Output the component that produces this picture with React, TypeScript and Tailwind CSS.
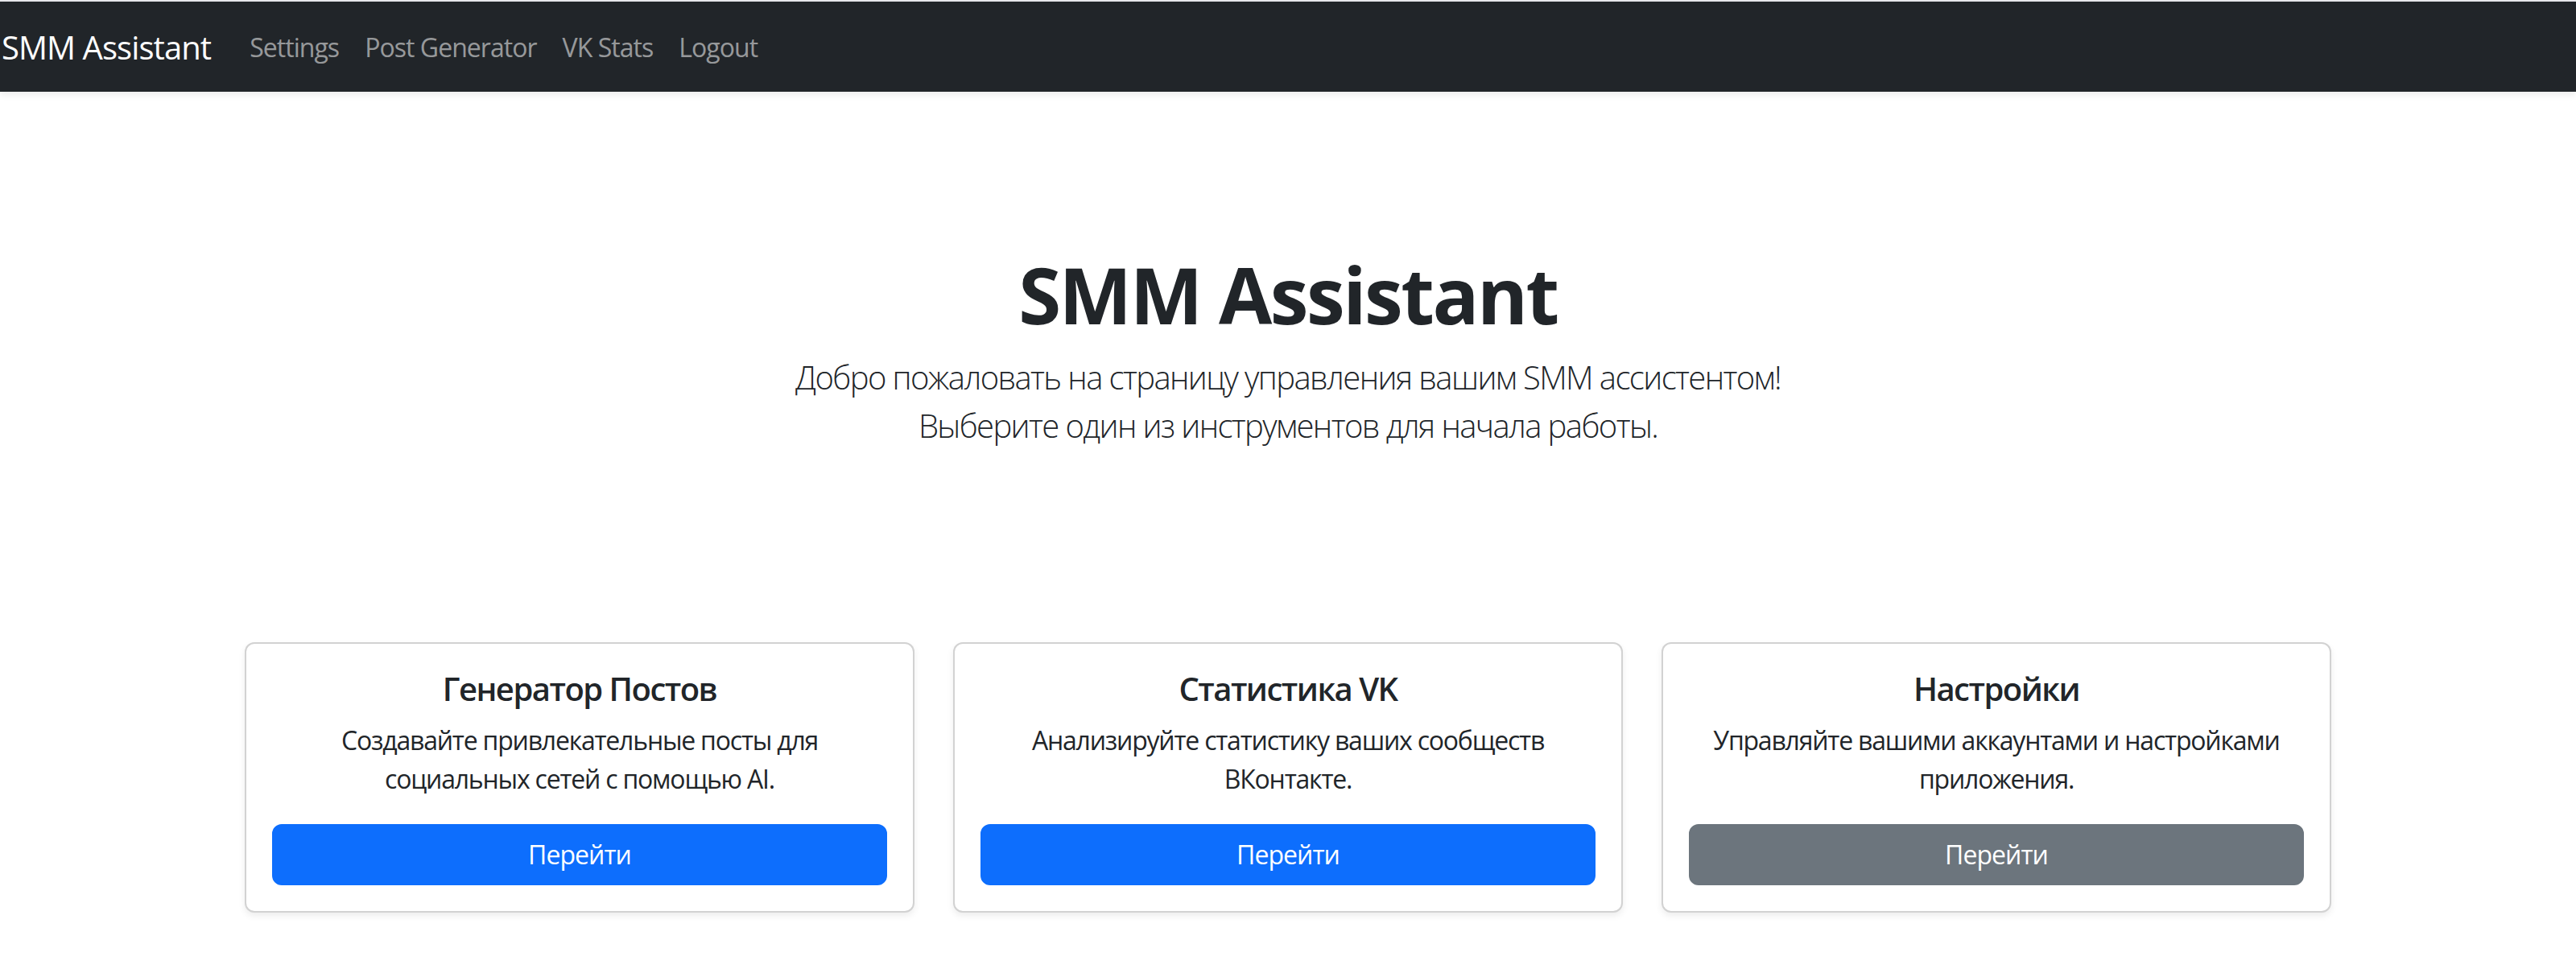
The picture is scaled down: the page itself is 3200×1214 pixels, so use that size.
import React from "react";

// ── data ──────────────────────────────────────────────────────────────────────

const NAV_LINKS = ["Settings", "Post Generator", "VK Stats", "Logout"];

type Tool = {
  title: string;
  text: string;
  variant: "primary" | "secondary";
};

const TOOLS: Tool[] = [
  {
    title: "Генератор Постов",
    text: "Создавайте привлекательные посты для социальных сетей с помощью AI.",
    variant: "primary",
  },
  {
    title: "Статистика VK",
    text: "Анализируйте статистику ваших сообществ ВКонтакте.",
    variant: "primary",
  },
  {
    title: "Настройки",
    text: "Управляйте вашими аккаунтами и настройками приложения.",
    variant: "secondary",
  },
];

// ── components ────────────────────────────────────────────────────────────────

function Navbar() {
  return (
    <nav className="flex h-[112px] items-center bg-[#212529] shadow-[0_4px_8px_rgba(0,0,0,0.075)]">
      <a href="#" className="mr-[32px] pl-[2px] pt-[2px] text-[40px] leading-[60px] tracking-[-0.023em] text-white">
        SMM Assistant
      </a>
      <ul className="flex items-center pt-[2px]">
        {NAV_LINKS.map((link) => (
          <li key={link}>
            <a href="#" className="block px-[16px] py-[16px] text-[32px] leading-[48px] tracking-[-0.03em] text-[rgba(255,255,255,0.55)]">
              {link}
            </a>
          </li>
        ))}
      </ul>
    </nav>
  );
}

function ToolCard({ tool }: { tool: Tool }) {
  const button =
    tool.variant === "primary"
      ? "border-[#0d6efd] bg-[#0d6efd]"
      : "border-[#6c757d] bg-[#6c757d]";

  return (
    <div className="rounded-[12px] border-2 border-[rgba(0,0,0,0.175)] bg-white p-[32px] text-center shadow-[0_4px_8px_rgba(0,0,0,0.075)]">
      <h5 className="mb-[16px] text-[40px] font-semibold leading-[1.2] tracking-[-0.038em]">{tool.title}</h5>
      <p className="mb-[32px] text-[32px] leading-[48px] tracking-[-0.038em]">{tool.text}</p>
      <a
        href="#"
        className={`block rounded-[12px] border-2 py-[12px] text-[32px] leading-[48px] tracking-[-0.03em] text-white ${button}`}
      >
        Перейти
      </a>
    </div>
  );
}

// ── page ──────────────────────────────────────────────────────────────────────

export default function App() {
  return (
    <div className="min-h-screen bg-white font-['Open_Sans',sans-serif] text-[#212529]">
      <div className="h-[2px] bg-[#e8e8ec]" />
      <Navbar />

      <main className="mx-auto w-[2640px] px-[24px]">
        <section className="pt-[194px] text-center">
          <h1 className="mb-[16px] text-[96px] font-bold leading-[1.2] tracking-[-0.026em]">SMM Assistant</h1>
          <p className="text-[40px] font-light leading-[60px] tracking-[-0.04em]">
            Добро пожаловать на страницу управления вашим SMM ассистентом!
            <br />
            Выберите один из инструментов для начала работы.
          </p>
        </section>

        <div className="mt-[239px] grid grid-cols-3 gap-[48px]">
          {TOOLS.map((tool) => (
            <ToolCard key={tool.title} tool={tool} />
          ))}
        </div>
      </main>
    </div>
  );
}
